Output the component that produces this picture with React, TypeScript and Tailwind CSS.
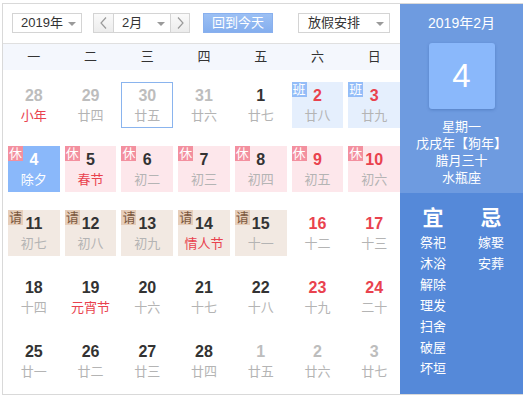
import React from "react";

type Cell = {
  d: string;
  l: string;
  other?: boolean;
  red?: boolean;
  lred?: boolean;
  tag?: "休" | "班" | "请";
  today?: boolean;
  sel?: boolean;
};

const cells: Cell[] = [
  { d: "28", l: "小年", other: true, lred: true },
  { d: "29", l: "廿四", other: true },
  { d: "30", l: "廿五", other: true, sel: true },
  { d: "31", l: "廿六", other: true },
  { d: "1", l: "廿七" },
  { d: "2", l: "廿八", red: true, tag: "班" },
  { d: "3", l: "廿九", red: true, tag: "班" },
  { d: "4", l: "除夕", tag: "休", today: true },
  { d: "5", l: "春节", tag: "休", lred: true },
  { d: "6", l: "初二", tag: "休" },
  { d: "7", l: "初三", tag: "休" },
  { d: "8", l: "初四", tag: "休" },
  { d: "9", l: "初五", tag: "休", red: true },
  { d: "10", l: "初六", tag: "休", red: true },
  { d: "11", l: "初七", tag: "请" },
  { d: "12", l: "初八", tag: "请" },
  { d: "13", l: "初九", tag: "请" },
  { d: "14", l: "情人节", tag: "请", lred: true },
  { d: "15", l: "十一", tag: "请" },
  { d: "16", l: "十二", red: true },
  { d: "17", l: "十三", red: true },
  { d: "18", l: "十四" },
  { d: "19", l: "元宵节", lred: true },
  { d: "20", l: "十六" },
  { d: "21", l: "十七" },
  { d: "22", l: "十八" },
  { d: "23", l: "十九", red: true },
  { d: "24", l: "二十", red: true },
  { d: "25", l: "廿一" },
  { d: "26", l: "廿二" },
  { d: "27", l: "廿三" },
  { d: "28", l: "廿四" },
  { d: "1", l: "廿五", other: true },
  { d: "2", l: "廿六", other: true },
  { d: "3", l: "廿七", other: true },
];

const weekdays = ["一", "二", "三", "四", "五", "六", "日"];

function Caret() {
  return (
    <svg width="8" height="4" viewBox="0 0 8 4" className="absolute right-[5px] top-[8px]">
      <path d="M0 0 L8 0 L4 4 Z" fill="#9a9a9a" />
    </svg>
  );
}

function Chevron({ dir }: { dir: "l" | "r" }) {
  return (
    <svg width="7" height="12" viewBox="0 0 7 12">
      <polyline
        points={dir === "l" ? "6,0.5 1,6 6,11.5" : "1,0.5 6,6 1,11.5"}
        fill="none"
        stroke="#9a9a9a"
        strokeWidth="1.2"
      />
    </svg>
  );
}

function DayCell({ c }: { c: Cell }) {
  let bg = "";
  if (c.today) bg = "bg-[#8ab8fa]";
  else if (c.tag === "休") bg = "bg-[#fde7eb]";
  else if (c.tag === "班") bg = "bg-[#e5effd]";
  else if (c.tag === "请") bg = "bg-[#f2e9e2]";

  let numColor = "text-[#333333]";
  if (c.today) numColor = "text-white";
  else if (c.other) numColor = "text-[#bdbdbd]";
  else if (c.red) numColor = "text-[#e9424e]";

  let lunarColor = "text-[#b4b4b4]";
  if (c.today) lunarColor = "text-white";
  else if (c.lred) lunarColor = "text-[#e9424e]";

  let tagCls = "";
  if (c.tag === "休") tagCls = "bg-[#f3909f] text-white";
  else if (c.tag === "班") tagCls = "bg-[#94bdf8] text-white";
  else if (c.tag === "请") tagCls = "bg-[#e6cdb9] text-[#7a573e]";

  return (
    <div
      className={`relative h-[46px] flex flex-col items-center ${bg} ${
        c.sel ? "border border-[#8ab4ee]" : ""
      }`}
    >
      {c.tag && (
        <div
          className={`absolute left-0 top-0 w-[15px] h-[15px] flex items-center justify-center text-[13px] leading-[15px] ${tagCls}`}
        >
          {c.tag}
        </div>
      )}
      <div
        className={`${c.sel ? "pt-[3px]" : "pt-[4px]"} text-[16px] leading-[20px] font-bold ${numColor}`}
      >
        {c.d}
      </div>
      <div className={`mt-[2px] text-[13px] leading-[16px] ${lunarColor}`}>{c.l}</div>
    </div>
  );
}

export default function App() {
  return (
    <div
      className="pt-[3px] pl-[2px] bg-white"
      style={{ fontFamily: '"Liberation Sans", "Noto Sans CJK SC", sans-serif' }}
    >
      <div className="w-[521px] h-[392px] border-l border-t border-b border-[#d9d9d9] flex">
        {/* main */}
        <div className="w-[397px] flex flex-col">
          {/* header */}
          <div className="h-[40px] border-b border-[#e0e0e0] flex items-start pt-[9px] pl-[9px]">
            <div className="relative w-[70px] h-[20px] border border-[#d4d4d4] bg-white text-[13px] leading-[18px] text-[#333] pl-[8px]">
              2019年
              <Caret />
            </div>
            <div className="ml-[11px] flex h-[20px]">
              <div className="w-[21px] h-[20px] border border-[#d4d4d4] bg-gradient-to-b from-[#fafafa] to-[#ececec] flex items-center justify-center">
                <Chevron dir="l" />
              </div>
              <div className="relative w-[56px] h-[20px] border-y border-[#d4d4d4] bg-white text-[13px] leading-[18px] text-[#333] pl-[8px]">
                2月
                <Caret />
              </div>
              <div className="w-[20px] h-[20px] border border-[#d4d4d4] bg-gradient-to-b from-[#fafafa] to-[#ececec] flex items-center justify-center">
                <Chevron dir="r" />
              </div>
            </div>
            <div className="ml-[13px] w-[70px] h-[20px] bg-gradient-to-b from-[#9cc0f4] to-[#84aeee] border border-[#89b0ee] text-white text-[13px] leading-[18px] text-center">
              回到今天
            </div>
            <div className="relative ml-[25px] w-[92px] h-[20px] border border-[#d4d4d4] bg-white text-[13px] leading-[18px] text-[#333] pl-[9px]">
              放假安排
              <Caret />
            </div>
          </div>
          {/* weekdays */}
          <div className="h-[26px] bg-[#f4f7fd] grid grid-cols-7 gap-x-[5px] pl-[5px] items-center">
            {weekdays.map((w) => (
              <div key={w} className="text-center text-[13px] text-[#333] leading-[26px]">
                {w}
              </div>
            ))}
          </div>
          {/* days */}
          <div className="grid grid-cols-7 gap-x-[5px] gap-y-[18px] pl-[5px] pt-[12px]">
            {cells.map((c, i) => (
              <DayCell key={i} c={c} />
            ))}
          </div>
        </div>
        {/* side panel */}
        <div className="w-[123px] flex flex-col text-white">
          <div className="h-[189px] bg-[#6e9be0] flex flex-col items-center pt-[9px]">
            <div className="text-[14px] leading-[20px]">2019年2月</div>
            <div className="mt-[10px] w-[66px] h-[66px] rounded-[3px] bg-[#8ab8fb] shadow-[0_1px_3px_rgba(40,80,150,0.35)] flex items-center justify-center text-[33px] font-light">
              4
            </div>
            <div className="mt-[9px] text-[13px] leading-[17px] text-center">
              <div>星期一</div>
              <div>戊戌年【狗年】</div>
              <div>腊月三十</div>
              <div>水瓶座</div>
            </div>
          </div>
          <div className="flex-1 bg-[#5589d9] pl-[1px] flex justify-center gap-[8px] pt-[12px]">
            <div className="w-[50px] flex flex-col items-center">
              <div className="text-[21px] leading-[26px] font-bold">宜</div>
              <div className="text-[13px] leading-[21px] mt-[1px] text-center">
                <div>祭祀</div>
                <div>沐浴</div>
                <div>解除</div>
                <div>理发</div>
                <div>扫舍</div>
                <div>破屋</div>
                <div>坏垣</div>
              </div>
            </div>
            <div className="w-[50px] flex flex-col items-center">
              <div className="text-[21px] leading-[26px] font-bold">忌</div>
              <div className="text-[13px] leading-[21px] mt-[1px] text-center">
                <div>嫁娶</div>
                <div>安葬</div>
              </div>
            </div>
          </div>
        </div>
      </div>
    </div>
  );
}
